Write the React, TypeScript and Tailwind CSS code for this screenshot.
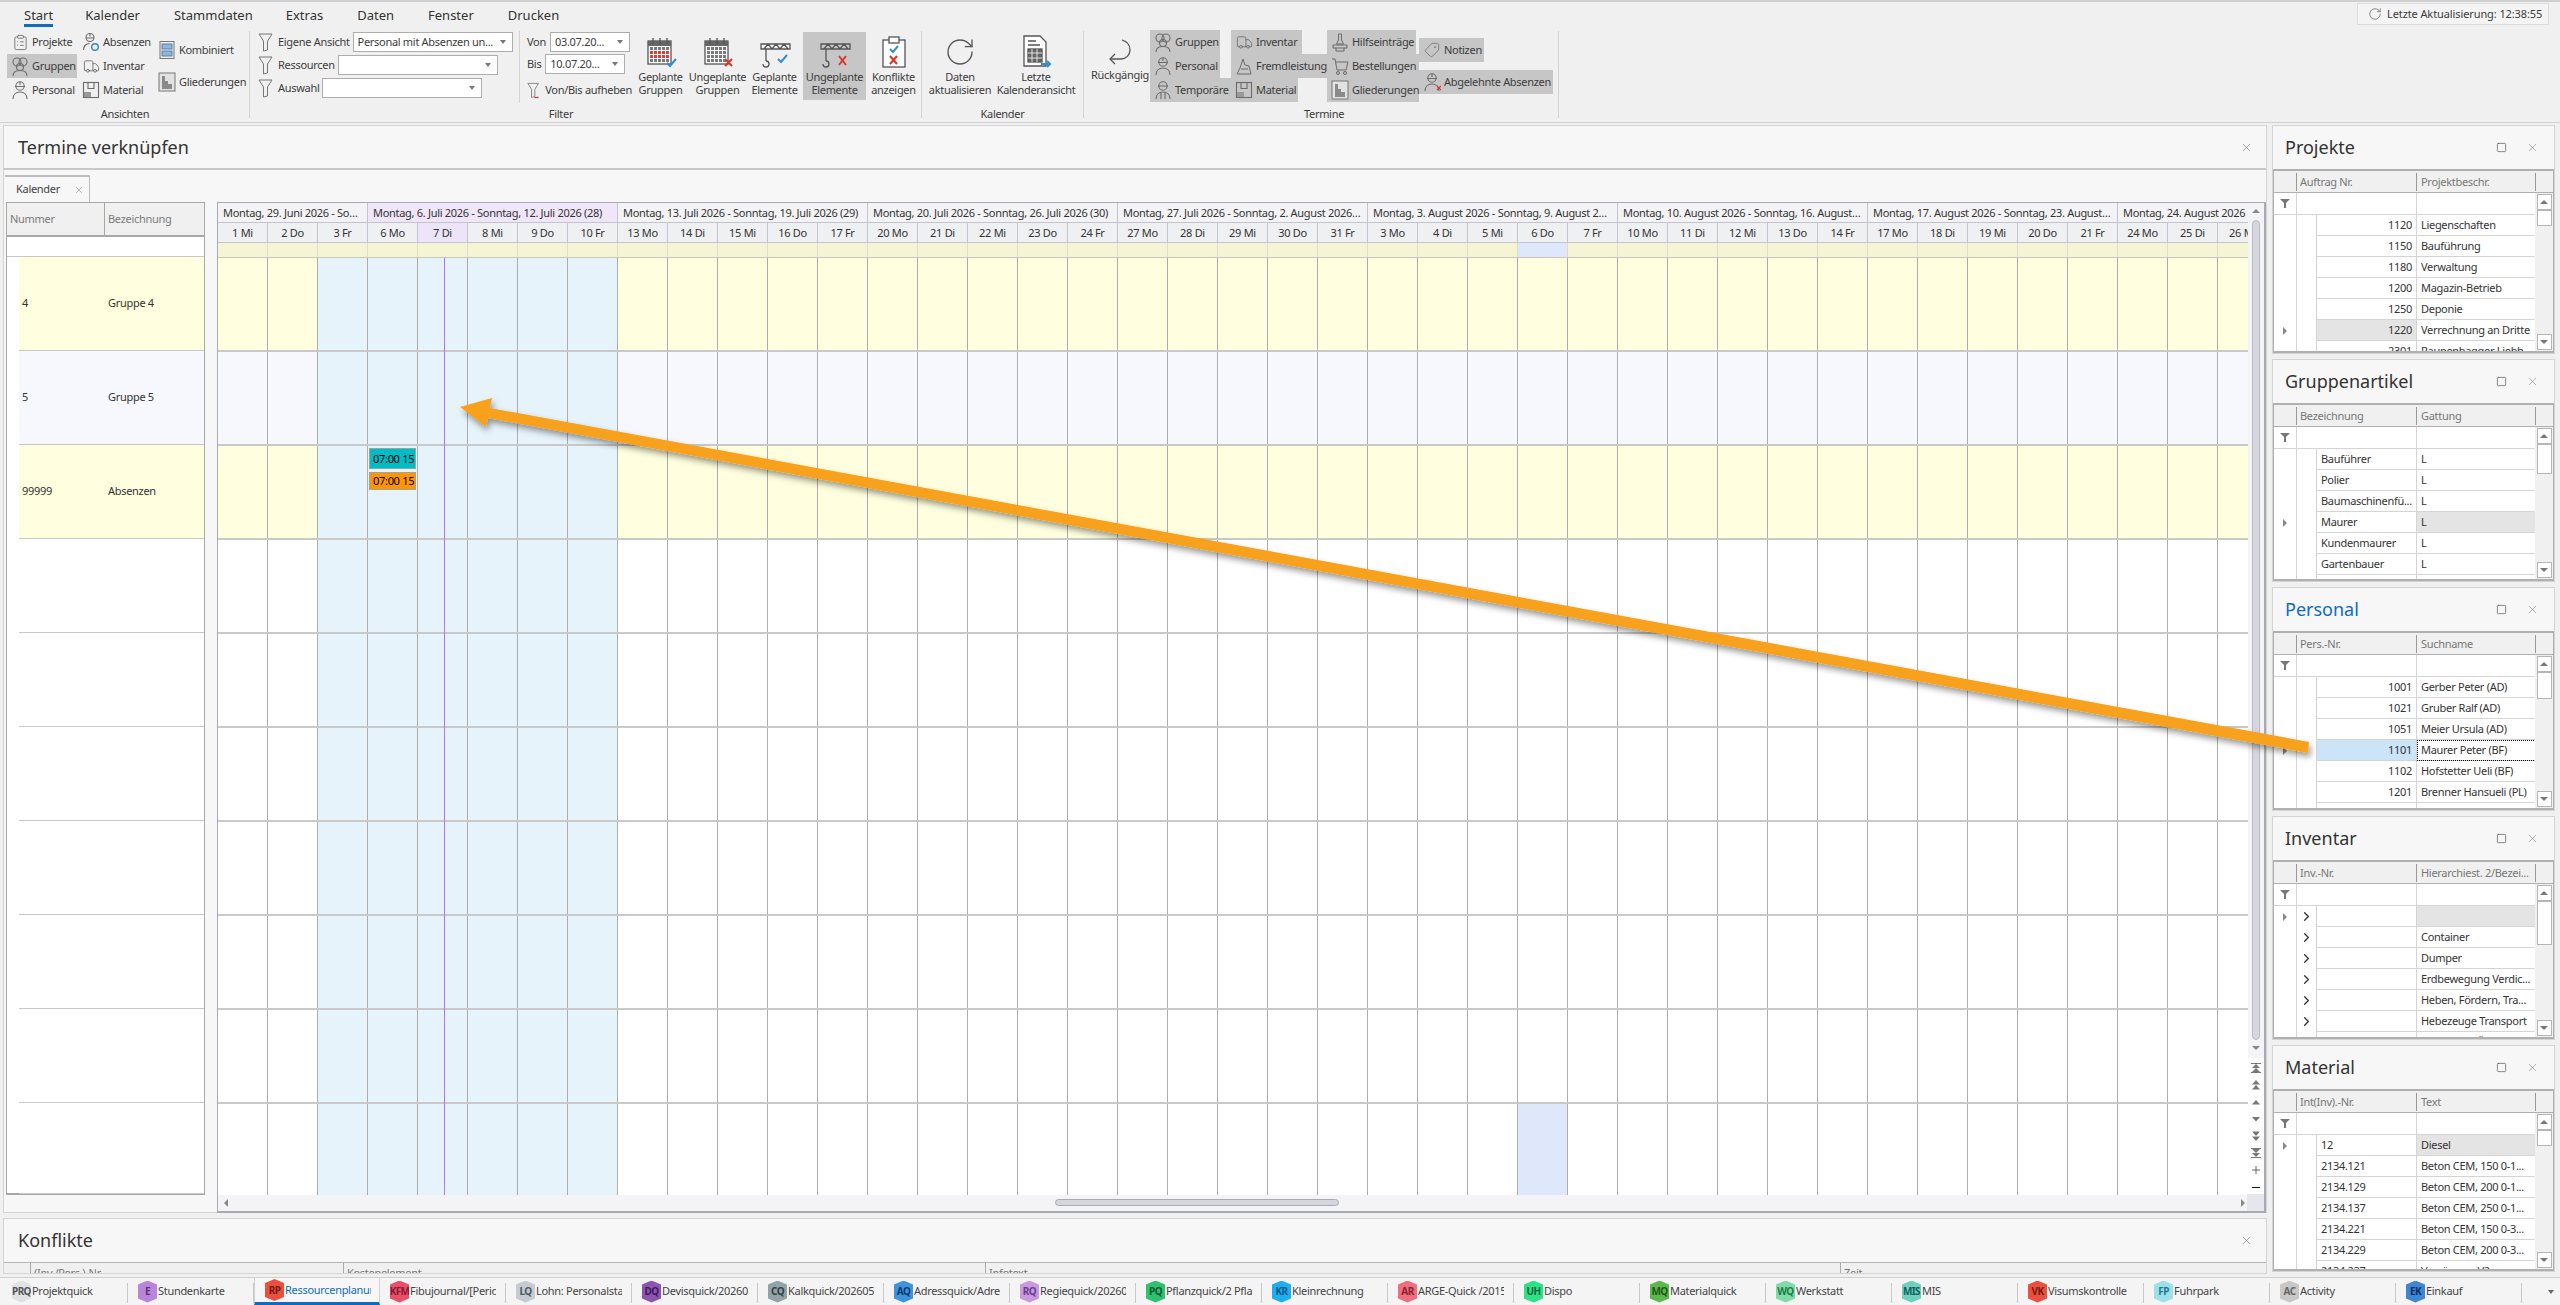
import React from "react";
import { ClipboardList, Truck, Tag, RotateCw, X, Square, ChevronRight } from "lucide-react";

const iconGray = "#6b6b6b";

// small hand drawn ribbon icons
const Funnel = ({ bar = false, dark = false }: { bar?: boolean; dark?: boolean }) => (
  <svg width="16" height="22" viewBox="0 0 16 22" fill="none" stroke={dark ? "#555" : "#777"} strokeWidth="1">
    <path d="M1 3h13L9.5 10v9l-4 1V10z" />
    {bar && <path d="M9 20h5" stroke="#d9362b" strokeWidth="1.5" />}
  </svg>
);
const Person = ({ hat = true, cross = false }: { hat?: boolean; cross?: boolean }) => (
  <svg width="18" height="20" viewBox="0 0 18 20" fill="none" stroke={iconGray} strokeWidth="1.1">
    <circle cx="9" cy="6" r="4.2" />
    {hat && <path d="M4 6.5h10M9 2v3" />}
    <path d="M2 19c0-4.5 3-7 7-7s7 2.500 7 7" />
    {cross && <path d="M14 14l4 4M18 14l-4 4" stroke="#d9362b" />}
  </svg>
);
const Absence = () => (
  <svg width="18" height="20" viewBox="0 0 18 20" fill="none" stroke={iconGray} strokeWidth="1.1">
    <circle cx="8" cy="5.500" r="4" />
    <path d="M4 6h8M8 1.500v3M1.500 18c0-4 2.500-6.500 6-6.500" />
    <circle cx="13" cy="15" r="3.300" stroke="#2f86c9" strokeWidth="1.400" />
  </svg>
);
const Group = () => (
  <svg width="20" height="21" viewBox="0 0 20 21" fill="none" stroke={iconGray} strokeWidth="1.1">
    <circle cx="7" cy="6" r="4" />
    <circle cx="13" cy="6" r="4" />
    <circle cx="10" cy="11" r="3.500" />
    <path d="M3 20c0-3.500 3-5.500 7-5.500s7 2 7 5.500" />
  </svg>
);
const Box = () => (
  <svg width="18" height="18" viewBox="0 0 18 18" fill="none" stroke={iconGray} strokeWidth="1.1">
    <rect x="1.500" y="1.500" width="15" height="15" />
    <path d="M6 1.500v6h6v-6" />
    <rect x="2" y="11" width="7" height="5" fill="#999" stroke="none" />
  </svg>
);
const Outline = () => (
  <svg width="18" height="20" viewBox="0 0 18 20" fill="#8a8a8a" stroke="#777">
    <rect x="1" y="1" width="16" height="18" fill="#e2e2e2" />
    <path d="M4 4h3v5h3v3h4v5H4z" stroke="none" />
  </svg>
);
const Combined = () => (
  <svg width="18" height="20" viewBox="0 0 18 20" fill="none" stroke="#5b7fa3">
    <rect x="2" y="1.500" width="14" height="17" stroke="#777" />
    <rect x="4" y="4" width="10" height="5" fill="#8db8dd" />
    <rect x="4" y="11" width="10" height="5" fill="#8db8dd" />
  </svg>
);
const Helper = () => (
  <svg width="18" height="20" viewBox="0 0 18 20" fill="none" stroke={iconGray}>
    <path d="M7.500 2h3v6l2 4h-7l2-4zM2 13h14v3H2zM5 16v3h8v-3" />
  </svg>
);
const Craft = () => (
  <svg width="18" height="20" viewBox="0 0 18 20" fill="none" stroke={iconGray}>
    <path d="M2 18h14l-2-8-4-1-2-6-3 9zM6 13h7" />
  </svg>
);
const Cart = () => (
  <svg width="18" height="20" viewBox="0 0 18 20" fill="none" stroke={iconGray}>
    <path d="M1 3h3l2 11h9l2-8H5" />
    <circle cx="7" cy="17" r="1.500" />
    <circle cx="14" cy="17" r="1.500" />
  </svg>
);
const Temp = () => (
  <svg width="18" height="20" viewBox="0 0 18 20" fill="none" stroke={iconGray} strokeWidth="1.1">
    <circle cx="9" cy="6" r="4.200" />
    <path d="M4 6h10M2 19c0-4.500 3-7 7-7s7 2.500 7 7M7 13v6M11 13v6" />
  </svg>
);
const CalendarBig = ({ kind }: { kind: "ok" | "no" }) => (
  <svg width="32" height="32" viewBox="0 0 32 32" fill="none">
    <rect x="3" y="5" width="23" height="23" fill="#fff" stroke="#555" strokeWidth="1.300" />
    <rect x="3" y="5" width="23" height="5" fill="#666" />
    <path d="M8 2v6M15 2v6M22 2v6" stroke="#555" strokeWidth="1.300" />
    {[12, 16, 20, 24].map((y) =>
      [6, 10, 14, 18, 22].map((x) => (
        <rect
          key={`${x}-${y}`}
          x={x - 1}
          y={y - 1}
          width="3"
          height="3"
          fill={kind === "ok" && y > 12 && y < 24 ? "#d9403a" : "#7a7a7a"}
        />
      ))
    )}
    {kind === "ok" ? (
      <path d="M22 27l3 3 6-7" stroke="#2f8ed6" strokeWidth="2" />
    ) : (
      <path d="M23 23l7 7M30 23l-7 7" stroke="#d9362b" strokeWidth="2" />
    )}
  </svg>
);
const CraneBig = ({ kind }: { kind: "ok" | "no" }) => (
  <svg width="34" height="32" viewBox="0 0 34 32" fill="none" stroke="#555" strokeWidth="1.300">
    <path d="M3 8h29v5H3zM6 13l4-5 4 5 4-5 4 5 4-5 4 5" />
    <path d="M8 13v12" />
    <path d="M8 25a3 3 0 1 1-3 3" />
    {kind === "ok" ? (
      <path d="M20 23l3 3 6-7" stroke="#2f8ed6" strokeWidth="2" />
    ) : (
      <path d="M21 20l7 9M28 20l-7 9" stroke="#d9362b" strokeWidth="2" />
    )}
  </svg>
);
const ConflictBig = () => (
  <svg width="28" height="32" viewBox="0 0 28 32" fill="none" stroke="#555" strokeWidth="1.300">
    <rect x="3" y="4" width="22" height="27" fill="#fff" />
    <rect x="9" y="1" width="10" height="6" fill="#fff" />
    <path d="M10 13l3 3 5-6" stroke="#2f8ed6" strokeWidth="2" />
    <path d="M10 20l7 8M17 20l-7 8" stroke="#d9362b" strokeWidth="2" />
  </svg>
);
const LastCalendarBig = () => (
  <svg width="34" height="34" viewBox="0 0 34 34" fill="none" stroke="#555" strokeWidth="1.300">
    <path d="M5 2h16l6 6v24H5z" fill="#fff" />
    <path d="M9 7h8M9 11h12" />
    <rect x="9" y="15" width="14" height="13" fill="#666" />
    <path d="M13 15v13M18 15v13M9 19h14M9 24h14" stroke="#fff" strokeWidth="0.800" />
    <path d="M22 30h9M28 27l3 3-3 3" stroke="#2f8ed6" strokeWidth="2" />
  </svg>
);
const UndoBig = () => (
  <svg width="26" height="28" viewBox="0 0 26 28" fill="none" stroke="#555" strokeWidth="1.300">
    <path d="M15 2c5 1.500 8 5 8 10s-4 9-9 9H3" />
    <path d="M8 16l-5 5 5 5" />
  </svg>
);

const SmallBtn = ({
  icon,
  label,
  w,
  active = false,
}: {
  icon: React.ReactNode;
  label: string;
  w: string;
  active?: boolean;
}) => (
  <div className={`h-[24px] flex items-center pl-[3px] gap-[2px] whitespace-nowrap ${w} ${active ? "bg-[#c6c6c6]" : ""}`}>
    <span className="w-[20px] flex justify-center shrink-0">{icon}</span>
    <span>{label}</span>
  </div>
);

const LargeBtn = ({
  icon,
  lines,
  w,
  active = false,
}: {
  icon: React.ReactNode;
  lines: string[];
  w: string;
  active?: boolean;
}) => (
  <div className={`h-[68px] flex flex-col items-center shrink-0 whitespace-nowrap ${w} ${active ? "bg-[#c6c6c6]" : ""}`}>
    <div className="h-[37px] flex items-end pb-[1px]">{icon}</div>
    <div className="leading-[13px] text-center mt-[1px]">
      {lines.map((l) => (
        <div key={l}>{l}</div>
      ))}
    </div>
  </div>
);

const Combo = ({ w, value = "" }: { w: string; value?: string }) => (
  <div className={`h-[20px] bg-white border border-[#adadad] flex items-center pl-[4px] pr-[6px] justify-between ${w}`}>
    <span className="truncate">{value}</span>
    <span className="w-0 h-0 border-l-[3px] border-r-[3px] border-t-[4px] border-l-transparent border-r-transparent border-t-[#777] shrink-0" />
  </div>
);

const Sep = ({ h = "h-[87px]" }: { h?: string }) => <div className={`w-px bg-[#d4d4d4] shrink-0 mt-[29px] ${h}`} />;

const GroupLabel = ({ text, w }: { text: string; w: string }) => (
  <div className={`absolute top-[104px] text-center ${w}`}>{text}</div>
);

const Ribbon = () => (
  <div className="h-[122px] shrink-0 bg-[#f0f0f0] border-t-2 border-[#cfcfcf] relative text-[11px] text-[#3c3c3c]">
    <div className="h-[26px] flex items-start pt-[5px] pl-[24px] gap-[30px] text-[13px] text-[#333] tracking-normal">
      <div className="border-b-[3px] border-[#0f6cbd] h-[20px] leading-[16px]">Start</div>
      <div className="ml-[2px] leading-[16px]">Kalender</div>
      <div className="ml-[4px] leading-[16px]">Stammdaten</div>
      <div className="ml-[3px] leading-[16px]">Extras</div>
      <div className="ml-[4px] leading-[16px]">Daten</div>
      <div className="ml-[4px] leading-[16px]">Fenster</div>
      <div className="ml-[4px] leading-[16px]">Drucken</div>
    </div>

    <div className="flex h-[92px] absolute top-0 left-0 right-0">
      {/* Ansichten */}
      <div className="w-[249px] shrink-0 relative pt-[27px] pl-[7px] flex">
        <div className="w-[71px] pt-[1px]">
          <SmallBtn w="w-[70px]" icon={<ClipboardList size={17} strokeWidth={1.200} color={iconGray} />} label="Projekte" />
          <SmallBtn w="w-[70px]" active icon={<Group />} label="Gruppen" />
          <SmallBtn w="w-[70px]" icon={<Person />} label="Personal" />
        </div>
        <div className="w-[76px] pt-[1px]">
          <SmallBtn w="w-[72px]" icon={<Absence />} label="Absenzen" />
          <SmallBtn w="w-[72px]" icon={<Truck size={17} strokeWidth={1.200} color={iconGray} />} label="Inventar" />
          <SmallBtn w="w-[72px]" icon={<Box />} label="Material" />
        </div>
        <div className="pt-[9px] flex flex-col gap-[8px]">
          <SmallBtn w="w-[90px]" icon={<Combined />} label="Kombiniert" />
          <SmallBtn w="w-[90px]" icon={<Outline />} label="Gliederungen" />
        </div>
        <GroupLabel text="Ansichten" w="left-[80px] w-[90px]" />
      </div>
      <Sep />

      {/* Filter */}
      <div className="w-[269px] shrink-0 pt-[30px] pl-[8px] flex flex-col gap-[3px] whitespace-nowrap">
        <div className="flex items-center gap-[4px] h-[20px]">
          <Funnel /> <span>Eigene Ansicht</span> <Combo w="w-[160px] -ml-[1px]" value="Personal mit Absenzen un..." />
        </div>
        <div className="flex items-center gap-[4px] h-[20px]">
          <Funnel /> <span>Ressourcen</span> <Combo w="w-[160px] -ml-[1px]" />
        </div>
        <div className="flex items-center gap-[4px] h-[20px]">
          <Funnel /> <span>Auswahl</span> <Combo w="w-[160px] -ml-[1px]" />
        </div>
      </div>
      <Sep h="h-[72px]" />
      <div className="w-[112px] shrink-0 pt-[30px] pl-[7px] flex flex-col gap-[2px] whitespace-nowrap relative">
        <div className="flex items-center gap-[4px]">
          <span>Von</span> <Combo w="w-[80px]" value="03.07.20..." />
        </div>
        <div className="flex items-center gap-[4px]">
          <span>Bis</span> <Combo w="w-[80px]" value="10.07.20..." />
        </div>
        <div className="flex items-center gap-[5px] mt-[3px] h-[22px]">
          <Funnel bar /> <span>Von/Bis aufheben</span>
        </div>
      </div>
      <div className="flex pt-[30px] shrink-0 relative">
        <LargeBtn w="w-[57px]" icon={<CalendarBig kind="ok" />} lines={["Geplante", "Gruppen"]} />
        <LargeBtn w="w-[57px]" icon={<CalendarBig kind="no" />} lines={["Ungeplante", "Gruppen"]} />
        <LargeBtn w="w-[57px]" icon={<CraneBig kind="ok" />} lines={["Geplante", "Elemente"]} />
        <LargeBtn w="w-[63px]" active icon={<CraneBig kind="no" />} lines={["Ungeplante", "Elemente"]} />
        <LargeBtn w="w-[55px]" icon={<ConflictBig />} lines={["Konflikte", "anzeigen"]} />
        <GroupLabel text="Filter" w="-left-[121px] w-[100px]" />
      </div>
      <Sep />

      {/* Kalender */}
      <div className="w-[161px] shrink-0 pt-[30px] pl-[6px] flex relative">
        <LargeBtn w="w-[64px]" icon={<RotateCw size={32} strokeWidth={1} color="#555" />} lines={["Daten", "aktualisieren"]} />
        <LargeBtn w="w-[88px]" icon={<LastCalendarBig />} lines={["Letzte", "Kalenderansicht"]} />
        <GroupLabel text="Kalender" w="left-0 w-[161px]" />
      </div>
      <Sep />

      {/* Termine */}
      <div className="w-[474px] shrink-0 pt-[28px] pl-[6px] flex relative">
        <LargeBtn w="w-[60px]" icon={<UndoBig />} lines={["Rückgängig"]} />
        <div className="ml-[0px] w-[81px]">
          <SmallBtn w="w-[70px]" active icon={<Group />} label="Gruppen" />
          <SmallBtn w="w-[70px]" active icon={<Person />} label="Personal" />
          <SmallBtn w="w-[81px]" active icon={<Temp />} label="Temporäre" />
        </div>
        <div className="w-[96px]">
          <SmallBtn w="w-[71px]" active icon={<Truck size={17} strokeWidth={1.200} color={iconGray} />} label="Inventar" />
          <SmallBtn w="w-[96px]" active icon={<Craft />} label="Fremdleistung" />
          <SmallBtn w="w-[67px]" active icon={<Box />} label="Material" />
        </div>
        <div className="w-[92px]">
          <SmallBtn w="w-[89px]" active icon={<Helper />} label="Hilfseinträge" />
          <SmallBtn w="w-[92px]" active icon={<Cart />} label="Bestellungen" />
          <SmallBtn w="w-[92px]" active icon={<Outline />} label="Gliederungen" />
        </div>
        <div className="pt-[8px] flex flex-col gap-[8px]">
          <SmallBtn w="w-[65px]" active icon={<Tag size={16} strokeWidth={1.100} color={iconGray} className="rotate-90" />} label="Notizen" />
          <SmallBtn w="w-[134px]" active icon={<Person cross />} label="Abgelehnte Absenzen" />
        </div>
        <GroupLabel text="Termine" w="left-[190px] w-[100px]" />
      </div>
      <Sep />
    </div>

    <div className="absolute top-[1px] left-[2357px] w-[192px] h-[22px] border border-[#dcdcdc] bg-[#f4f4f4] flex items-center pl-[10px] gap-[5px] whitespace-nowrap tracking-[-0.1px]">
      <RotateCw size={14} strokeWidth={1.100} color="#555" />
      <span>Letzte Aktualisierung: 12:38:55</span>
    </div>
  </div>
);

/* ---- scheduler ---- */
const weeks: { label: string; w: string; purple?: boolean }[] = [
  { label: "Montag, 29. Juni 2026 - Sonntag, 5. Juli 2026 (27)", w: "w-[150px]" },
  { label: "Montag, 6. Juli 2026 - Sonntag, 12. Juli 2026 (28)", w: "w-[250px]", purple: true },
  { label: "Montag, 13. Juli 2026 - Sonntag, 19. Juli 2026 (29)", w: "w-[250px]" },
  { label: "Montag, 20. Juli 2026 - Sonntag, 26. Juli 2026 (30)", w: "w-[250px]" },
  { label: "Montag, 27. Juli 2026 - Sonntag, 2. August 2026 (31)", w: "w-[250px]" },
  { label: "Montag, 3. August 2026 - Sonntag, 9. August 2026 (32)", w: "w-[250px]" },
  { label: "Montag, 10. August 2026 - Sonntag, 16. August 2026 (33)", w: "w-[250px]" },
  { label: "Montag, 17. August 2026 - Sonntag, 23. August 2026 (34)", w: "w-[250px]" },
  { label: "Montag, 24. August 2026 - Sonntag, 30. August 2026 (35)", w: "w-[250px]" },
];
const days = [
  "1 Mi", "2 Do", "3 Fr",
  "6 Mo", "7 Di", "8 Mi", "9 Do", "10 Fr",
  "13 Mo", "14 Di", "15 Mi", "16 Do", "17 Fr",
  "20 Mo", "21 Di", "22 Mi", "23 Do", "24 Fr",
  "27 Mo", "28 Di", "29 Mi", "30 Do", "31 Fr",
  "3 Mo", "4 Di", "5 Mi", "6 Do", "7 Fr",
  "10 Mo", "11 Di", "12 Mi", "13 Do", "14 Fr",
  "17 Mo", "18 Di", "19 Mi", "20 Do", "21 Fr",
  "24 Mo", "25 Di", "26 Mi", "27 Do", "28 Fr",
];

const rowKinds = ["yellow", "lilac", "yellow", "white", "white", "white", "white", "white", "white", "last"];

const cellBg = (kind: string, i: number) => {
  if (i >= 2 && i <= 7) return "bg-[#e6f3fb]";
  if (kind === "yellow") return "bg-[#ffffdf]";
  if (kind === "lilac") return "bg-[#f6f8fe]";
  if (kind === "last" && i === 26) return "bg-[#dfe7fa]";
  return "bg-white";
};

const GanttRow = ({ kind, h }: { kind: string; h: string }) => (
  <div className={`flex ${h} border-b-2 border-[#c9c9c9]`}>
    {days.map((d, i) => (
      <div
        key={i}
        className={`w-[50px] shrink-0 border-r border-[#adadad] relative ${cellBg(kind, i)}`}
      />
    ))}
  </div>
);

const Gantt = () => (
  <div className="flex-1 min-w-0 relative overflow-hidden border-t border-l border-b-2 border-r-2 border-[#a9a9b5] bg-[#f4f4f6] h-[1011px]">
    <div className="w-[2033px] h-[992px] overflow-hidden relative">
      <div className="flex h-[20px] text-[11px] text-[#333] whitespace-nowrap">
        {weeks.map((w) => (
          <div
            key={w.label}
            className={`shrink-0 truncate px-[5px] leading-[19px] border-r border-b border-[#c4c4d0] ${w.w} ${w.purple ? "bg-[#efe6f9]" : "bg-[#f3f3f6]"}`}
          >
            {w.label}
          </div>
        ))}
      </div>
      <div className="flex h-[20px] text-[11px] text-[#333]">
        {days.map((d, i) => (
          <div
            key={i}
            className={`w-[50px] shrink-0 text-center leading-[19px] border-r border-b border-[#c4c4d0] ${i === 4 ? "bg-[#ece4f8]" : "bg-[#eff0f2]"}`}
          >
            {d}
          </div>
        ))}
      </div>
      <div className="flex h-[15px] border-b border-[#c8c8b8]">
        {days.map((d, i) => (
          <div
            key={i}
            className={`w-[50px] shrink-0 border-r border-[#dcdcc8] ${i === 26 ? "bg-[#dfe7fa]" : "bg-[#f5f5d6]"}`}
          />
        ))}
      </div>
      {rowKinds.map((k, i) => (
        <GanttRow key={i} kind={k} h={i === 9 ? "h-[93px]" : "h-[94px]"} />
      ))}
      {/* today line */}
      <div className="absolute top-[55px] bottom-0 left-[226px] w-px bg-[#b277e6]" />
      {/* appointments */}
      <div className="absolute left-[151px] top-[245px] w-[47px] h-[21px] bg-[#00bcc4] border border-[#9ca3a3] text-[11px] leading-[19px] pl-[3px] overflow-hidden text-black whitespace-nowrap">
        07:00 15
      </div>
      <div className="absolute left-[151px] top-[269px] w-[47px] h-[18px] bg-[#ff9500] border border-[#9ca3a3] text-[11px] leading-[16px] pl-[3px] overflow-hidden text-black whitespace-nowrap">
        07:00 15
      </div>
    </div>
    {/* vertical scroll + scheduler navigation */}
    <div className="absolute right-0 top-0 w-[16px] bottom-[17px] bg-white flex flex-col items-center text-[#777]">
      <div className="w-full h-[855px] bg-[#f4f4f6] flex flex-col items-center shrink-0">
        <div className="w-0 h-0 mt-[6px] border-l-[4px] border-r-[4px] border-b-[4px] border-l-transparent border-r-transparent border-b-[#888]" />
        <div className="w-[8px] h-[820px] mt-[7px] rounded-[4px] bg-[#d5d6de] border border-[#b9bac6]" />
        <div className="w-0 h-0 mt-[6px] border-l-[4px] border-r-[4px] border-t-[4px] border-l-transparent border-r-transparent border-t-[#888]" />
      </div>
      <div className="flex flex-col items-center gap-[7px] mt-[5px] text-[#666]">
        <svg width="10" height="10" viewBox="0 0 10 10" fill="#777"><path d="M0 0h10v1H0zM5 1l4 4H1zM5 5l4 4H1zM0 9h10v1H0z" /></svg>
        <svg width="10" height="10" viewBox="0 0 10 10" fill="#777"><path d="M5 0l4 4.500H1zM5 5l4 4.500H1z" /></svg>
        <svg width="10" height="10" viewBox="0 0 10 10" fill="#777"><path d="M5 3l4 4.500H1z" /></svg>
        <svg width="10" height="10" viewBox="0 0 10 10" fill="#777"><path d="M5 7.500L1 3h8z" /></svg>
        <svg width="10" height="10" viewBox="0 0 10 10" fill="#777"><path d="M5 5L1 .5h8zM5 10L1 5.500h8z" /></svg>
        <svg width="10" height="10" viewBox="0 0 10 10" fill="#777"><path d="M0 0h10v1H0zM5 5L1 1h8zM5 9L1 5h8zM0 9h10v1H0z" /></svg>
        <svg width="10" height="10" viewBox="0 0 10 10" fill="none" stroke="#666"><path d="M5 1v8M1 5h8" /></svg>
        <svg width="10" height="10" viewBox="0 0 10 10" fill="none" stroke="#111"><path d="M1 5.500h8" /></svg>
      </div>
    </div>
    {/* horizontal scroll */}
    <div className="absolute left-0 right-0 bottom-0 h-[17px] flex items-center">
      <div className="w-0 h-0 ml-[6px] border-t-[4px] border-b-[4px] border-r-[4px] border-t-transparent border-b-transparent border-r-[#888]" />
      <div className="ml-[827px] w-[284px] h-[7px] rounded-[4px] bg-[#d5d6de] border border-[#a9aab6]" />
      <div className="ml-[902px] w-0 h-0 border-t-[4px] border-b-[4px] border-l-[4px] border-t-transparent border-b-transparent border-l-[#888]" />
      <div className="ml-auto w-[17px] h-[17px] bg-[#e6e7ec]" />
    </div>
  </div>
);

const ResourceGrid = () => (
  <div className="w-[199px] shrink-0 h-[993px] border border-[#a8a8a8] border-b-2 bg-white text-[11px] text-[#333]">
    <div className="h-[34px] flex bg-[#f0f0f0] border-b-2 border-[#a8a8a8] text-[#7a7a7a]">
      <div className="w-[98px] border-r border-[#a8a8a8] pl-[3px] leading-[32px]">Nummer</div>
      <div className="pl-[3px] leading-[32px]">Bezeichnung</div>
    </div>
    <div className="h-[20px] border-b border-[#c8c8c8]" />
    {[
      ["4", "Gruppe 4", "bg-[#ffffdf]"],
      ["5", "Gruppe 5", "bg-[#f6f8fe]"],
      ["99999", "Absenzen", "bg-[#ffffdf]"],
      ["", "", "bg-white"],
      ["", "", "bg-white"],
      ["", "", "bg-white"],
      ["", "", "bg-white"],
      ["", "", "bg-white"],
      ["", "", "bg-white"],
      ["", "", "bg-white"],
    ].map(([n, b, bg], i) => (
      <div key={i} className={`flex items-center ${i === 9 ? "h-[91px]" : "h-[94px]"} ml-[12px] border-b border-[#c8c8c8] ${bg}`}>
        <div className="w-[89px] pl-[3px]">{n}</div>
        <div>{b}</div>
      </div>
    ))}
  </div>
);

const MainPanel = () => (
  <div className="w-[2264px] shrink-0 flex flex-col">
    <div className="h-[1088px] border border-[#d4d4d4] bg-[#f7f7f7] flex flex-col">
      <div className="h-[44px] shrink-0 flex items-center justify-between pl-[14px] pr-[13px] border-b-2 border-[#c8c8c8]">
        <span className="text-[18px] text-[#333] tracking-normal">Termine verknüpfen</span>
        <X size={13} strokeWidth={1} color="#666" />
      </div>
      <div className="h-[32px] shrink-0 flex items-end pl-[1px]">
        <div className="w-[85px] h-[27px] border-t-2 border-r border-[#bdbdbd] flex items-center pl-[11px] gap-[14px] text-[11px] text-[#444]">
          Kalender <X size={10} strokeWidth={1} color="#555" />
        </div>
      </div>
      <div className="flex pl-[2px] gap-[12px] flex-1 min-h-0">
        <ResourceGrid />
        <Gantt />
      </div>
    </div>
    <div className="h-[56px] mt-[5px] border border-[#d4d4d4] bg-[#f7f7f7] overflow-hidden">
      <div className="h-[44px] flex items-center justify-between pl-[14px] pr-[13px] border-b border-[#b4b4b4]">
        <span className="text-[18px] text-[#333] tracking-normal">Konflikte</span>
        <X size={13} strokeWidth={1} color="#666" />
      </div>
      <div className="flex h-[12px] bg-[#f0f0f0] text-[11px] text-[#777] leading-[20px] whitespace-nowrap">
        <div className="w-[27px] border-r border-[#aaa]" />
        <div className="w-[313px] border-r border-[#aaa] pl-[3px]">(Inv./Pers.)-Nr.</div>
        <div className="w-[642px] border-r border-[#aaa] pl-[3px]">Kostenelement</div>
        <div className="w-[855px] border-r border-[#aaa] pl-[3px]">Infotext</div>
        <div className="pl-[3px]">Zeit</div>
      </div>
    </div>
  </div>
);

/* ---- side panels ---- */
type Row = { a: string; b: string; right?: boolean; sel?: "a" | "b" | "blue"; chevron?: boolean };

const ScrollBtn = ({ up }: { up: boolean }) => (
  <div className="w-[15px] h-[16px] bg-white border border-[#b5b5b5] flex items-center justify-center shrink-0">
    <div
      className={`w-0 h-0 border-l-[4px] border-r-[4px] border-l-transparent border-r-transparent ${up ? "border-b-[4px] border-b-[#777]" : "border-t-[4px] border-t-[#777]"}`}
    />
  </div>
);

const SidePanel = ({
  title,
  colA,
  colB,
  rows,
  h,
  blue = false,
  thumb,
}: {
  title: string;
  colA: string;
  colB: string;
  rows: Row[];
  h: string;
  blue?: boolean;
  thumb: string;
}) => (
  <div className={`w-[283px] shrink-0 border border-[#d4d4d4] bg-[#f7f7f7] flex flex-col ${h}`}>
    <div className="h-[43px] shrink-0 flex items-center pl-[12px] pr-[15px]">
      <span className={`text-[18px] tracking-normal ${blue ? "text-[#0f6cbd]" : "text-[#333]"}`}>{title}</span>
      <Square size={11} strokeWidth={1.500} color="#555" className="ml-auto mr-[19px]" />
      <X size={13} strokeWidth={1} color="#777" />
    </div>
    <div className="flex-1 min-h-0 border-2 border-[#b0b0b0] border-l-[1px] border-r-[1px] bg-white flex flex-col overflow-hidden relative text-[11px]">
      <div className="h-[22px] shrink-0 bg-[#f0f0f0] border-b border-[#b0b0b0] flex items-center text-[#777] whitespace-nowrap">
        <div className="w-[23px] h-[18px] border-r border-[#999] shrink-0" />
        <div className="w-[120px] h-[18px] border-r border-[#999] pl-[3px] shrink-0 leading-[18px]">{colA}</div>
        <div className="w-[119px] h-[18px] border-r border-[#999] pl-[4px] shrink-0 leading-[18px] truncate">{colB}</div>
      </div>
      <div className="h-[22px] shrink-0 flex border-b border-[#d4d4d4]">
        <div className="w-[23px] border-r border-[#d4d4d4] flex items-center justify-center">
          <svg width="10" height="9" viewBox="0 0 10 9" fill="#777">
            <path d="M0 0h10L6 4v5H4V4z" />
          </svg>
        </div>
        <div className="w-[120px] border-r border-[#d4d4d4]" />
        <div className="w-[119px]" />
      </div>
      {rows.map((r, i) => (
        <div key={i} className="h-[21px] shrink-0 flex text-[#333] whitespace-nowrap">
          <div className="w-[23px] border-r border-[#d4d4d4] flex items-center justify-center">
            {r.sel && <div className="w-0 h-0 border-t-[4px] border-b-[4px] border-l-[4px] border-t-transparent border-b-transparent border-l-[#888]" />}
          </div>
          <div className="w-[20px] border-r border-[#d4d4d4] flex items-center justify-center">
            {r.chevron && <ChevronRight size={15} strokeWidth={2} color="#333" />}
          </div>
          <div
            className={`w-[100px] border-r border-b border-[#d4d4d4] leading-[20px] px-[4px] ${r.right ? "text-right" : ""} ${r.sel === "a" ? "bg-[#e4e4e4]" : r.sel === "blue" ? "bg-[#cce4f7]" : ""}`}
          >
            {r.a}
          </div>
          <div
            className={`w-[119px] border-b border-[#d4d4d4] leading-[20px] pl-[4px] truncate ${r.sel === "b" ? "bg-[#e4e4e4]" : ""} ${r.sel === "blue" ? "outline-dotted outline-1 -outline-offset-1 outline-black" : ""}`}
          >
            {r.b}
          </div>
        </div>
      ))}
      {/* grid scrollbar */}
      <div className="absolute right-0 top-[22px] bottom-0 w-[18px] bg-[#f0f0f0] flex flex-col items-center pt-[1px] pb-[1px]">
        <ScrollBtn up />
        <div className={`w-[15px] bg-white border border-[#b5b5b5] shrink-0 ${thumb}`} />
        <div className="flex-1" />
        <ScrollBtn up={false} />
      </div>
    </div>
  </div>
);

const projekte: Row[] = [
  { a: "1120", b: "Liegenschaften", right: true },
  { a: "1150", b: "Bauführung", right: true },
  { a: "1180", b: "Verwaltung", right: true },
  { a: "1200", b: "Magazin-Betrieb", right: true },
  { a: "1250", b: "Deponie", right: true },
  { a: "1220", b: "Verrechnung an Dritte", right: true, sel: "a" },
  { a: "2301", b: "Raupenbagger Liebh.", right: true },
];
const gruppen: Row[] = [
  { a: "Bauführer", b: "L" },
  { a: "Polier", b: "L" },
  { a: "Baumaschinenfü...", b: "L" },
  { a: "Maurer", b: "L", sel: "b" },
  { a: "Kundenmaurer", b: "L" },
  { a: "Gartenbauer", b: "L" },
  { a: "", b: "" },
];
const personal: Row[] = [
  { a: "1001", b: "Gerber Peter (AD)", right: true },
  { a: "1021", b: "Gruber Ralf (AD)", right: true },
  { a: "1051", b: "Meier Ursula (AD)", right: true },
  { a: "1101", b: "Maurer Peter (BF)", right: true, sel: "blue" },
  { a: "1102", b: "Hofstetter Ueli (BF)", right: true },
  { a: "1201", b: "Brenner Hansueli (PL)", right: true },
  { a: "1202", b: "Hofmeier Hansruedi", right: true },
];
const inventar: Row[] = [
  { a: "", b: "", chevron: true, sel: "b" },
  { a: "", b: "Container", chevron: true },
  { a: "", b: "Dumper", chevron: true },
  { a: "", b: "Erdbewegung Verdic...", chevron: true },
  { a: "", b: "Heben, Fördern, Tra...", chevron: true },
  { a: "", b: "Hebezeuge Transport", chevron: true },
  { a: "", b: "HOLZ-, GERÜSTUNG", chevron: true },
];
const material: Row[] = [
  { a: "12", b: "Diesel", sel: "b" },
  { a: "2134.121", b: "Beton CEM, 150  0-1..." },
  { a: "2134.129", b: "Beton CEM, 200  0-1..." },
  { a: "2134.137", b: "Beton CEM, 250  0-1..." },
  { a: "2134.221", b: "Beton CEM, 150  0-3..." },
  { a: "2134.229", b: "Beton CEM, 200  0-3..." },
  { a: "2134.237", b: "Verzögerer V2" },
];

/* ---- bottom task bar ---- */
const tasks: { code: string; label: string; color: string; text: string; active?: boolean }[] = [
  { code: "PRQ", label: "Projektquick", color: "bg-[#dfe3e6]", text: "text-[#555]" },
  { code: "E", label: "Stundenkarte", color: "bg-[#b886d8]", text: "text-[#5d2c86]" },
  { code: "RP", label: "Ressourcenplanur", color: "bg-[#e8503f]", text: "text-[#7a1a10]", active: true },
  { code: "KFM", label: "Fibujournal/[Perio", color: "bg-[#e8506a]", text: "text-[#8a1a30]" },
  { code: "LQ", label: "Lohn: Personalsta", color: "bg-[#c5cbd0]", text: "text-[#4a5a66]" },
  { code: "DQ", label: "Devisquick/20260.", color: "bg-[#8e55b0]", text: "text-[#3c1a5a]" },
  { code: "CQ", label: "Kalkquick/202605!", color: "bg-[#92a3a8]", text: "text-[#2f3f44]" },
  { code: "AQ", label: "Adressquick/Adres", color: "bg-[#3e93dc]", text: "text-[#0e3a66]" },
  { code: "RQ", label: "Regiequick/20260", color: "bg-[#c79ae0]", text: "text-[#6a3a8a]" },
  { code: "PQ", label: "Pflanzquick/2 Pflar", color: "bg-[#2fc070]", text: "text-[#0c5a2f]" },
  { code: "KR", label: "Kleinrechnung", color: "bg-[#1eaef0]", text: "text-[#0a5a8a]" },
  { code: "AR", label: "ARGE-Quick /2015", color: "bg-[#ee7080]", text: "text-[#8a1f30]" },
  { code: "UH", label: "Dispo", color: "bg-[#2fe088]", text: "text-[#0c6a3a]" },
  { code: "MQ", label: "Materialquick", color: "bg-[#5cb84e]", text: "text-[#1f5a14]" },
  { code: "WQ", label: "Werkstatt", color: "bg-[#7fdca8]", text: "text-[#1f7a4a]" },
  { code: "MIS", label: "MIS", color: "bg-[#6fd0c0]", text: "text-[#14605a]" },
  { code: "VK", label: "Visumskontrolle", color: "bg-[#e8503f]", text: "text-[#7a1a10]" },
  { code: "FP", label: "Fuhrpark", color: "bg-[#9ce0ea]", text: "text-[#1f7a8a]" },
  { code: "AC", label: "Activity", color: "bg-[#c8c8c8]", text: "text-[#666]" },
  { code: "EK", label: "Einkauf", color: "bg-[#3f86d0]", text: "text-[#0e2f66]" },
];

const TaskBar = () => (
  <div className="h-[28px] shrink-0 bg-[#f4f4f4] border-t border-[#d0d0d0] flex pl-[2px] text-[11px] text-[#444] whitespace-nowrap relative">
    {tasks.map((t) => (
      <div
        key={t.code + t.label}
        className={`w-[126px] shrink-0 h-full flex items-center pl-[10px] gap-[1px] relative ${t.active ? "border-b-[3px] border-[#0f6cbd] border-l border-r border-l-[#d0d0d0] border-r-[#d0d0d0] text-[#0f6cbd] bg-[#f7f7f7]" : "after:absolute after:right-0 after:top-[5px] after:h-[20px] after:w-px after:bg-[#c8c8c8]"}`}
      >
        <span
          className={`w-[19px] h-[22px] shrink-0 flex items-center justify-center text-[10px] font-bold tracking-[-0.6px] overflow-hidden [clip-path:polygon(50%_0,100%_18%,100%_82%,50%_100%,0_82%,0_18%)] ${t.color} ${t.text}`}
        >
          {t.code}
        </span>
        <span className="overflow-hidden w-[86px]">{t.label}</span>
      </div>
    ))}
    <div className="absolute right-[6px] top-[12px] w-0 h-0 border-l-[3px] border-r-[3px] border-t-[4px] border-l-transparent border-r-transparent border-t-[#666]" />
  </div>
);

const Arrow = () => (
  <svg className="absolute left-0 top-0 pointer-events-none" width="2560" height="1305" viewBox="0 0 2560 1305" fill="none">
    <defs>
      <filter id="arrowShadow" x="-5%" y="-20%" width="110%" height="140%">
        <feDropShadow dx="2" dy="4" stdDeviation="3" floodColor="#000" floodOpacity="0.4" />
      </filter>
    </defs>
    <path
      d="M460 407 L492 398 L490 408 L2309 742 L2308 753 L488 418 L486 427 Z"
      fill="#f7a11a"
      filter="url(#arrowShadow)"
    />
  </svg>
);

export default function App() {
  return (
    <div
      className="w-[2560px] h-[1305px] overflow-hidden relative flex flex-col bg-[#f0f0f0] text-[#333] tracking-[-0.3px]"
      style={{ fontFamily: '"Noto Sans", "Open Sans", sans-serif' }}
    >
      <Ribbon />
      <div className="flex-1 min-h-0 flex pt-[2px] pl-[3px] pr-[5px] gap-[5px] border-t border-[#d0d0d0] overflow-hidden">
        <MainPanel />
        <div className="flex flex-col gap-[5px]">
          <SidePanel title="Projekte" colA="Auftrag Nr." colB="Projektbeschr." rows={projekte} h="h-[229px]" thumb="h-[16px]" />
          <SidePanel title="Gruppenartikel" colA="Bezeichnung" colB="Gattung" rows={gruppen} h="h-[223px]" thumb="h-[30px]" />
          <SidePanel title="Personal" colA="Pers.-Nr." colB="Suchname" rows={personal} h="h-[224px]" blue thumb="h-[27px]" />
          <SidePanel title="Inventar" colA="Inv.-Nr." colB="Hierarchiest. 2/Bezei..." rows={inventar} h="h-[224px]" thumb="h-[44px]" />
          <SidePanel title="Material" colA="Int(Inv).-Nr." colB="Text" rows={material} h="h-[227px]" thumb="h-[16px]" />
        </div>
      </div>
      <TaskBar />
      <Arrow />
    </div>
  );
}
